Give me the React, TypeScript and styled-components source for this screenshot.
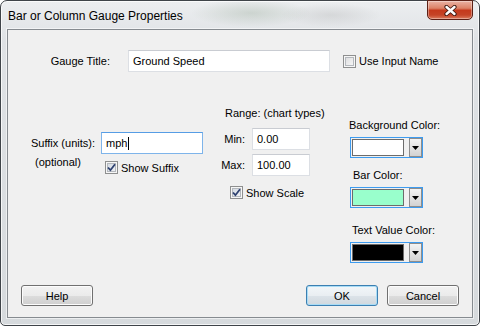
import React from 'react';
import styled, { createGlobalStyle } from 'styled-components';

const GlobalStyle = createGlobalStyle`
  html, body {
    margin: 0;
    padding: 0;
  }
  body {
    width: 480px;
    height: 326px;
    overflow: hidden;
    background: #ffffff;
    font-family: "Liberation Sans", Arial, sans-serif;
    font-size: 11px;
    color: #000000;
  }
`;

const Window = styled.div`
  box-sizing: border-box;
  width: 480px;
  height: 326px;
  border: 1px solid #3f4449;
  border-radius: 7px 7px 5px 5px;
  padding: 0 6px 7px 6px;
  display: flex;
  flex-direction: column;
  background:
    radial-gradient(ellipse 60px 14px at 250px 12px, rgba(140, 160, 140, 0.3), transparent),
    radial-gradient(ellipse 50px 12px at 330px 14px, rgba(160, 160, 160, 0.25), transparent),
    linear-gradient(180deg, #eceef0 0%, #dfe2e5 40px, #d6dadd 100%);
  box-shadow: inset 0 0 0 1px rgba(255, 255, 255, 0.75);
`;

const TitleBar = styled.div`
  height: 28px;
  display: flex;
  justify-content: space-between;
  align-items: flex-start;
`;

const Caption = styled.div`
  padding: 8px 0 0 1px;
  font-size: 12px;
  line-height: 14px;
  color: #000000;
`;

const CloseButton = styled.div`
  box-sizing: border-box;
  width: 46px;
  height: 20px;
  margin-top: -1px;
  border: 1px solid #5b2016;
  border-radius: 0 0 5px 5px;
  display: flex;
  align-items: center;
  justify-content: center;
  background: linear-gradient(180deg, #eab3a4 0%, #dc8267 40%, #c5391c 52%, #c54427 78%, #dc7c5f 100%);
  box-shadow: inset 0 0 0 1px rgba(255, 255, 255, 0.35);
`;

const Client = styled.div`
  flex: 1;
  display: flex;
  flex-direction: column;
  border: 1px solid #868b90;
  background: #f0f0f0;
  padding-top: 20px;
  box-shadow: 0 0 0 1px rgba(255, 255, 255, 0.55);
`;

const TitleRow = styled.div`
  display: flex;
  align-items: center;
  height: 22px;
`;

const TitleLabel = styled.div`
  width: 102px;
  margin-right: 18px;
  text-align: right;
`;

const Field = styled.div<{ $width: number; $focused?: boolean }>`
  box-sizing: border-box;
  width: ${p => p.$width}px;
  height: 22px;
  padding-left: 4px;
  display: flex;
  align-items: center;
  background: #ffffff;
  border: 1px solid ${p => (p.$focused ? '#7eb4ea' : '#dcdfe4')};
  border-top-color: ${p => (p.$focused ? '#569de5' : '#c9ccd2')};
`;

const Caret = styled.span`
  width: 1px;
  height: 13px;
  margin-left: 1px;
  background: #000000;
`;

const CheckRow = styled.div<{ $ml?: number; $mt?: number }>`
  display: flex;
  align-items: center;
  gap: 3px;
  white-space: nowrap;
  margin-left: ${p => p.$ml || 0}px;
  margin-top: ${p => p.$mt || 0}px;
`;

const CheckBox = styled.span<{ $checked?: boolean }>`
  box-sizing: border-box;
  width: 13px;
  height: 13px;
  flex: none;
  display: flex;
  align-items: center;
  justify-content: center;
  border: 1px solid #8e8f8f;
  background: ${p =>
    p.$checked
      ? 'linear-gradient(135deg, #cfd6df 0%, #f5f6f8 100%)'
      : 'linear-gradient(135deg, #d9dadb 0%, #fbfbfb 100%)'};
  box-shadow: inset 0 0 0 1px #f6f6f6, inset 0 0 0 2px #b4b8bd;
`;

const Body = styled.div`
  display: flex;
  align-items: flex-start;
`;

const SuffixColumn = styled.div`
  padding-top: 60px;
  display: grid;
  grid-template-columns: 93px 102px;
  align-items: start;
`;

const SuffixLabel = styled.div`
  height: 22px;
  line-height: 22px;
  padding-right: 6px;
  text-align: right;
  white-space: nowrap;
`;

const OptionalLabel = styled.div`
  padding-left: 27px;
  margin-top: 2px;
  line-height: 13px;
`;

const RangeColumn = styled.div`
  width: 94px;
  margin-left: 13px;
  padding-top: 34px;
  display: flex;
  flex-direction: column;
`;

const RangeTitle = styled.div`
  padding-left: 9px;
  line-height: 14px;
  white-space: nowrap;
`;

const RangeGrid = styled.div`
  margin-top: 8px;
  display: grid;
  grid-template-columns: 29px 58px;
  column-gap: 7px;
  row-gap: 4px;
  align-items: center;
`;

const RangeLabel = styled.div`
  text-align: right;
  white-space: nowrap;
`;

const ColorColumn = styled.div`
  margin-left: 39px;
  padding-top: 46px;
  display: flex;
  flex-direction: column;
`;

const ColorLabel = styled.div<{ $indent: number; $mt: number }>`
  line-height: 14px;
  white-space: nowrap;
  padding-left: ${p => p.$indent}px;
  margin-top: ${p => p.$mt}px;
`;

const ColorCombo = styled.div`
  box-sizing: border-box;
  width: 73px;
  height: 21px;
  margin: 5px 0 0 1px;
  border: 1px solid #3d9bef;
  display: flex;
  align-items: stretch;
  background: #f0f0f0;
`;

const Swatch = styled.div<{ $color: string }>`
  box-sizing: border-box;
  width: 52px;
  height: 17px;
  margin: 1px 0 0 1px;
  border: 1px solid #6c6c6c;
  background: ${p => p.$color};
`;

const DropButton = styled.div`
  box-sizing: border-box;
  width: 13px;
  margin-left: 5px;
  display: flex;
  align-items: center;
  justify-content: center;
  border: 1px solid #8d8d8d;
  background: linear-gradient(180deg, #f4f4f4 0%, #e3e3e3 50%, #d2d2d2 100%);
`;

const Footer = styled.div`
  margin-top: auto;
  padding: 0 13px 11px 13px;
  display: flex;
  align-items: center;
`;

const Button = styled.div<{ $default?: boolean }>`
  box-sizing: border-box;
  width: 72px;
  height: 21px;
  display: flex;
  align-items: center;
  justify-content: center;
  border: 1px solid ${p => (p.$default ? '#3c7fb1' : '#707070')};
  border-radius: 3px;
  background: ${p =>
    p.$default
      ? 'linear-gradient(180deg, #f2f6f9 0%, #e9eef2 50%, #dce3e9 51%, #d0d8de 100%)'
      : 'linear-gradient(180deg, #f2f2f2 0%, #ebebeb 50%, #dddddd 51%, #cfcfcf 100%)'};
  box-shadow: inset 0 0 0 1px ${p => (p.$default ? '#a8dcf6' : '#fcfcfc')};
`;

const Spacer = styled.div`
  flex: 1;
`;

const ButtonGroup = styled.div`
  display: flex;
  gap: 9px;
`;

function CloseGlyph() {
  return (
    <svg width="13" height="11" viewBox="0 0 13 11">
      <path d="M2.5 2 L10.5 9 M10.5 2 L2.5 9" stroke="#3b1710" strokeWidth="4.2" strokeLinecap="round" />
      <path d="M2.5 2 L10.5 9 M10.5 2 L2.5 9" stroke="#ffffff" strokeWidth="2.4" strokeLinecap="round" />
    </svg>
  );
}

function CheckMark() {
  return (
    <svg width="9" height="9" viewBox="0 0 9 9">
      <path d="M1 4.5 L3.4 7.2 L8 1.2" fill="none" stroke="#2e4170" strokeWidth="1.8" />
    </svg>
  );
}

function Arrow() {
  return (
    <svg width="7" height="4" viewBox="0 0 7 4">
      <path d="M0 0 H7 L3.5 4 Z" fill="#000000" />
    </svg>
  );
}

function Check({ checked, label, ml, mt }: { checked?: boolean; label: string; ml?: number; mt?: number }) {
  return (
    <CheckRow $ml={ml} $mt={mt}>
      <CheckBox $checked={checked}>{checked && <CheckMark />}</CheckBox>
      <span>{label}</span>
    </CheckRow>
  );
}

const colors = [
  { label: 'Background Color:', color: '#ffffff', indent: 0, mt: 0 },
  { label: 'Bar Color:', color: '#99ffcc', indent: 4, mt: 10 },
  { label: 'Text Value Color:', color: '#000000', indent: 3, mt: 15 },
];

export default function App() {
  return (
    <>
      <GlobalStyle />
      <Window>
        <TitleBar>
          <Caption>Bar or Column Gauge Properties</Caption>
          <CloseButton>
            <CloseGlyph />
          </CloseButton>
        </TitleBar>
        <Client>
          <TitleRow>
            <TitleLabel>Gauge Title:</TitleLabel>
            <Field $width={202}>Ground Speed</Field>
            <Check label="Use Input Name" ml={13} />
          </TitleRow>

          <Body>
            <SuffixColumn>
              <SuffixLabel>Suffix (units):</SuffixLabel>
              <Field $width={102} $focused>
                mph
                <Caret />
              </Field>
              <OptionalLabel>(optional)</OptionalLabel>
              <Check checked label="Show Suffix" ml={4} mt={7} />
            </SuffixColumn>

            <RangeColumn>
              <RangeTitle>Range: (chart types)</RangeTitle>
              <RangeGrid>
                <RangeLabel>Min:</RangeLabel>
                <Field $width={58}>0.00</Field>
                <RangeLabel>Max:</RangeLabel>
                <Field $width={58}>100.00</Field>
              </RangeGrid>
              <Check checked label="Show Scale" ml={14} mt={10} />
            </RangeColumn>

            <ColorColumn>
              {colors.map(c => (
                <React.Fragment key={c.label}>
                  <ColorLabel $indent={c.indent} $mt={c.mt}>
                    {c.label}
                  </ColorLabel>
                  <ColorCombo>
                    <Swatch $color={c.color} />
                    <DropButton>
                      <Arrow />
                    </DropButton>
                  </ColorCombo>
                </React.Fragment>
              ))}
            </ColorColumn>
          </Body>

          <Footer>
            <Button>Help</Button>
            <Spacer />
            <ButtonGroup>
              <Button $default>OK</Button>
              <Button>Cancel</Button>
            </ButtonGroup>
          </Footer>
        </Client>
      </Window>
    </>
  );
}
